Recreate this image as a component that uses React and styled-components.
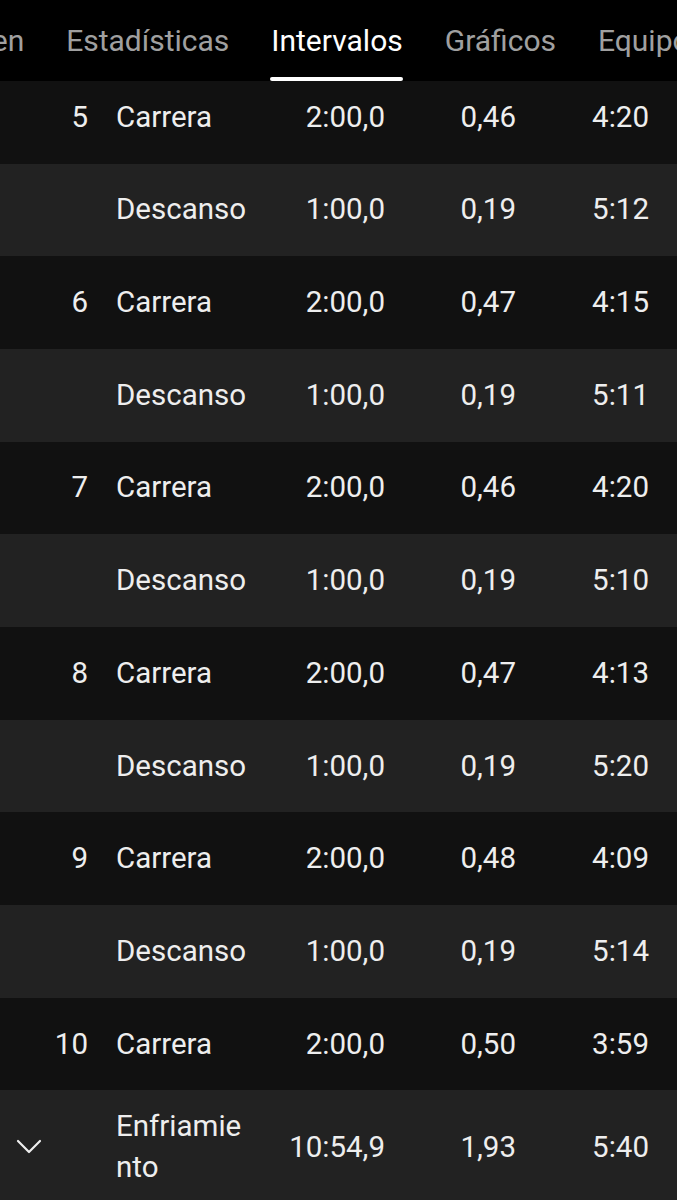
import styled, { createGlobalStyle } from 'styled-components'

const GlobalStyle = createGlobalStyle`
	html, body {
		margin: 0;
		padding: 0;
		background: #000;
	}
	body {
		font-family: Roboto, "Noto Sans", sans-serif;
		-webkit-font-smoothing: antialiased;
	}
`

const tabs = ['Resumen', 'Estadísticas', 'Intervalos', 'Gráficos', 'Equipo']

const laps = [
	{ n: 4, name: 'Descanso', time: '1:00,0', dist: '0,19', pace: '5:11' },
	{ n: 5, name: 'Carrera', time: '2:00,0', dist: '0,46', pace: '4:20' },
	{ name: 'Descanso', time: '1:00,0', dist: '0,19', pace: '5:12' },
	{ n: 6, name: 'Carrera', time: '2:00,0', dist: '0,47', pace: '4:15' },
	{ name: 'Descanso', time: '1:00,0', dist: '0,19', pace: '5:11' },
	{ n: 7, name: 'Carrera', time: '2:00,0', dist: '0,46', pace: '4:20' },
	{ name: 'Descanso', time: '1:00,0', dist: '0,19', pace: '5:10' },
	{ n: 8, name: 'Carrera', time: '2:00,0', dist: '0,47', pace: '4:13' },
	{ name: 'Descanso', time: '1:00,0', dist: '0,19', pace: '5:20' },
	{ n: 9, name: 'Carrera', time: '2:00,0', dist: '0,48', pace: '4:09' },
	{ name: 'Descanso', time: '1:00,0', dist: '0,19', pace: '5:14' },
	{ n: 10, name: 'Carrera', time: '2:00,0', dist: '0,50', pace: '3:59' },
	{ name: 'Enfriamiento', time: '10:54,9', dist: '1,93', pace: '5:40', expand: true },
]

const Chevron = () => (
	<svg width="26" height="16" viewBox="0 0 26 16" fill="none">
		<path d="M2 2 L13 13 L24 2" stroke="#eee" strokeWidth="2.2" strokeLinecap="round" strokeLinejoin="round" />
	</svg>
)

const App = () => {
	return (
		<>
			<GlobalStyle />
			<Screen>
				<TabBar>
					<TabStrip>
						{tabs.map((t) => (
							<Tab key={t} $active={t === 'Intervalos'}>
								{t}
							</Tab>
						))}
					</TabStrip>
				</TabBar>
				<Viewport>
					<List>
						{laps.map((l, i) => (
							<Row key={i} $alt={i % 2 === 0}>
								<Num>{l.expand ? <Chevron /> : l.n}</Num>
								<Name>{l.name}</Name>
								<Time>{l.time}</Time>
								<Dist>{l.dist}</Dist>
								<Pace>{l.pace}</Pace>
							</Row>
						))}
					</List>
				</Viewport>
			</Screen>
		</>
	)
}

const Screen = styled.div`
	width: 677px;
	height: 1200px;
	background: #000;
	display: flex;
	flex-direction: column;
	overflow: hidden;
`

const TabBar = styled.nav`
	height: 81px;
	flex-shrink: 0;
	background: #000;
	overflow: hidden;
	position: relative;
	z-index: 1;
`

const TabStrip = styled.div`
	display: flex;
	height: 100%;
	gap: 42px;
	margin-left: -101px;
	white-space: nowrap;
`

const Tab = styled.div`
	position: relative;
	display: flex;
	align-items: center;
	font-size: 30px;
	color: ${(p) => (p.$active ? '#fff' : '#a0a0a0')};
	&::after {
		content: '';
		display: ${(p) => (p.$active ? 'block' : 'none')};
		position: absolute;
		left: -1px;
		right: 0;
		bottom: 0;
		height: 4px;
		border-radius: 2px;
		background: #fff;
	}
`

const Viewport = styled.div`
	flex: 1;
	overflow: hidden;
`

const List = styled.div`
	margin-top: -102.8px;
`

const Row = styled.div`
	min-height: 92.7px;
	box-sizing: border-box;
	padding: 16px 0;
	display: grid;
	grid-template-columns: 88px 164px 133px 131px 133px;
	align-items: center;
	background: ${(p) => (p.$alt ? '#222222' : '#111111')};
	color: #eeeeee;
	font-size: 29.5px;
	line-height: 41px;
`

const Num = styled.div`
	display: flex;
	justify-content: flex-end;
	& svg {
		margin-right: 46px;
	}
`

const Name = styled.div`
	padding-left: 28px;
	word-break: break-all;
`

const Time = styled.div`
	text-align: right;
`

const Dist = styled.div`
	text-align: right;
`

const Pace = styled.div`
	text-align: right;
`

export default App
